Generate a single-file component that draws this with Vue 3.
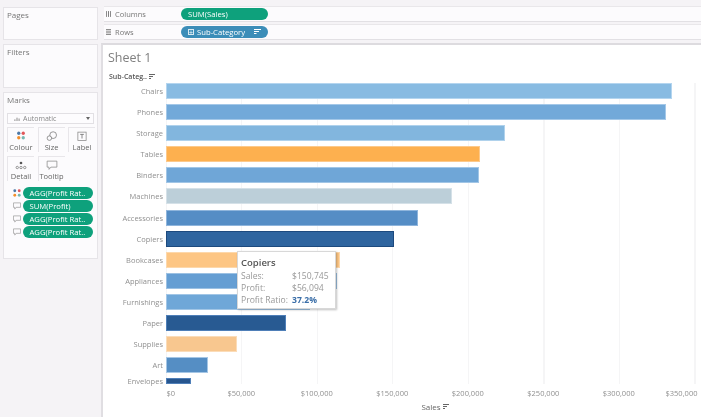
<script setup>
const bars = [
  { name: 'Chairs', w: 506, c: '#88bbe2', b: '#b4d5ef' },
  { name: 'Phones', w: 500, c: '#72a9d9', b: '#a4c8e8' },
  { name: 'Storage', w: 339, c: '#82b6de', b: '#b0d2ec' },
  { name: 'Tables', w: 314, c: '#fdb04f', b: '#fdc98a' },
  { name: 'Binders', w: 313, c: '#6fa6d7', b: '#a2c6e6' },
  { name: 'Machines', w: 286, c: '#bccfd9', b: '#d5e1e8' },
  { name: 'Accessories', w: 252, c: '#558dc5', b: '#8fb5dc' },
  { name: 'Copiers', w: 228, c: '#2f659f', b: '#1d4a7e' },
  { name: 'Bookcases', w: 174, c: '#fdc684', b: '#fdd8ab' },
  { name: 'Appliances', w: 171, c: '#659ed3', b: '#9cc1e3' },
  { name: 'Furnishings', w: 144, c: '#6fa7d8', b: '#a2c6e6' },
  { name: 'Paper', w: 120, c: '#285a92', b: '#4f7fb8' },
  { name: 'Supplies', w: 71, c: '#f8c78f', b: '#fbdcb8' },
  { name: 'Art', w: 42, c: '#558ec4', b: '#a5c6e5' },
  { name: 'Envelopes', w: 25, c: '#27568f', b: '#4f7fb8', small: true },
]
const ticks = ['$0', '$50,000', '$100,000', '$150,000', '$200,000', '$250,000', '$300,000', '$350,000']
const cards = [
  { label: 'Colour', icon: 'colour' },
  { label: 'Size', icon: 'size' },
  { label: 'Label', icon: 'label' },
  { label: 'Detail', icon: 'detail' },
  { label: 'Tooltip', icon: 'tooltip' },
]
const pills = [
  { text: 'AGG(Profit Rat..', icon: 'colour' },
  { text: 'SUM(Profit)', icon: 'tooltip' },
  { text: 'AGG(Profit Rat..', icon: 'tooltip' },
  { text: 'AGG(Profit Rat..', icon: 'tooltip' },
]
</script>

<template>
  <div class="page">
    <aside class="side">
      <section class="panel pages"><h3>Pages</h3></section>
      <section class="panel filters"><h3>Filters</h3></section>
      <section class="panel marks">
        <h3>Marks</h3>
        <div class="select">
          <svg width="6" height="5" viewBox="0 0 7 6"><path d="M1 6V4M3.500 6V2M6 6V3" stroke="#777" stroke-width="1" fill="none" /></svg>
          <span>Automatic</span>
          <i class="caret"></i>
        </div>
        <div class="cards">
          <div v-for="c in cards" :key="c.label" class="card">
            <svg width="12" height="10.500" viewBox="0 0 16 14">
              <template v-if="c.icon === 'colour'">
                <circle cx="5" cy="3" r="2.200" fill="#4e79a7" />
                <circle cx="11" cy="3" r="2.200" fill="#e15759" />
                <circle cx="5" cy="9" r="2.200" fill="#f28e2b" />
                <circle cx="11" cy="9" r="2.200" fill="#76b7b2" />
              </template>
              <template v-else-if="c.icon === 'size'">
                <circle cx="9.500" cy="5.500" r="4.500" fill="none" stroke="#777" />
                <circle cx="4.500" cy="9.500" r="3" fill="#fcfbfd" stroke="#777" />
              </template>
              <template v-else-if="c.icon === 'label'">
                <rect x="2.500" y="1.500" width="11" height="11" fill="none" stroke="#888" />
                <path d="M5.500 4.500h5M8 4.500v5.500" stroke="#666" fill="none" />
              </template>
              <template v-else-if="c.icon === 'detail'">
                <circle cx="8" cy="4" r="1.800" fill="#555" />
                <circle cx="3" cy="10" r="1.600" fill="none" stroke="#777" />
                <circle cx="8" cy="10" r="1.600" fill="none" stroke="#777" />
                <circle cx="13" cy="10" r="1.600" fill="none" stroke="#777" />
              </template>
              <path v-else d="M1.500 1.500h13v8h-8l-2.500 3v-3h-2.500z" fill="none" stroke="#888" />
            </svg>
            <span>{{ c.label }}</span>
          </div>
        </div>
        <div class="pills">
          <div v-for="(p, i) in pills" :key="i" class="pill-row">
            <svg width="8" height="8" viewBox="0 0 9 9">
              <template v-if="p.icon === 'colour'">
                <circle cx="2" cy="2" r="1.600" fill="#4e79a7" />
                <circle cx="7" cy="2" r="1.600" fill="#e15759" />
                <circle cx="2" cy="7" r="1.600" fill="#f28e2b" />
                <circle cx="7" cy="7" r="1.600" fill="#76b7b2" />
              </template>
              <path v-else d="M.500 1h8v5h-5l-1.500 2v-2h-1.500z" fill="none" stroke="#999" stroke-width=".8" />
            </svg>
            <span class="pill green small">{{ p.text }}</span>
          </div>
        </div>
      </section>
    </aside>

    <main class="main">
      <div class="shelf">
        <div class="shelf-label">
          <svg width="5" height="6" viewBox="0 0 6 7"><path d="M.500 0v7M3 0v7M5.500 0v7" stroke="#666" fill="none" /></svg>
          <span>Columns</span>
        </div>
        <span class="pill green wide">SUM(Sales)</span>
      </div>
      <div class="shelf">
        <div class="shelf-label">
          <svg width="5" height="6" viewBox="0 0 6 7"><path d="M0 .500h6M0 2.500h6M0 4.500h6M0 6.500h6" stroke="#777" fill="none" /></svg>
          <span>Rows</span>
        </div>
        <span class="pill blue wide">
          <i class="plus">+</i>
          <span class="grow">Sub-Category</span>
          <svg width="7" height="6" viewBox="0 0 7 6"><path d="M0 .500h7M0 2.500h5M0 4.500h2.500" stroke="#fff" fill="none" /></svg>
        </span>
      </div>

      <div class="sheet">
        <h1>Sheet 1</h1>
        <div class="head">
          <span>Sub-Categ..</span>
          <svg width="6" height="6" viewBox="0 0 6 6"><path d="M0 .500h6M0 2.500h4M0 4.500h2" stroke="#666" fill="none" /></svg>
        </div>
        <div class="chart">
          <div v-for="b in bars" :key="b.name" class="row" :class="{ short: b.small }">
            <span class="name">{{ b.name }}</span>
            <div class="track">
              <div class="bar" :style="{ width: b.w + 'px', background: b.c, borderColor: b.b }"></div>
            </div>
          </div>
          <div class="tip">
            <strong>Copiers</strong>
            <div class="tip-row"><span class="k">Sales:</span><span>$150,745</span></div>
            <div class="tip-row"><span class="k">Profit:</span><span>$56,094</span></div>
            <div class="tip-row"><span class="k">Profit Ratio:</span><b>37.2%</b></div>
          </div>
        </div>
        <div class="axis">
          <span v-for="t in ticks" :key="t">{{ t }}</span>
        </div>
        <div class="axis-title">
          <span>Sales</span>
          <svg width="6" height="6" viewBox="0 0 6 6"><path d="M0 .500h6M0 2.500h4M0 4.500h2" stroke="#666" fill="none" /></svg>
        </div>
      </div>
    </main>
  </div>
</template>

<style>
html, body { margin: 0; background: #f5f3f6; }
</style>

<style scoped>
.page {
  width: 701px;
  height: 417px;
  display: flex;
  overflow: hidden;
  background: #f5f3f6;
  font-family: "Open Sans", "Noto Sans", sans-serif;
  color: #666;
  filter: blur(0.35px);
}
.side {
  width: 95px;
  margin: 7px 3px 0 3px;
  display: flex;
  flex-direction: column;
  gap: 4px;
  flex: none;
}
.panel {
  background: #fcfbfd;
  border: 1px solid #e6e4e8;
  box-sizing: border-box;
  padding: 2px 3px;
}
.panel h3 { margin: 0; font-weight: 400; font-size: 8px; line-height: 10px; color: #777; }
.pages { height: 33px; }
.filters { height: 44px; }
.marks { height: 167px; }
.select {
  margin-top: 8px;
  height: 9px;
  border: 1px solid #e2e0e4;
  display: flex;
  align-items: center;
  gap: 3px;
  padding: 0 3px 0 6px;
  font-size: 7px;
  background: #fdfcfe;
  color: #888;
}
.select span { flex: 1; }
.caret { width: 0; height: 0; border: 2px solid transparent; border-top: 3px solid #666; border-bottom: 0; }
.cards { display: grid; grid-template-columns: repeat(3, 27px); gap: 4px 3.500px; margin-top: 3px; }
.card {
  height: 25px;
  box-sizing: border-box;
  border: 1px solid #e8e6ea;
  border-bottom-width: 0;
  border-right-width: 0;
  padding-top: 3px;
  display: flex;
  flex-direction: column;
  align-items: center;
  font-size: 7.500px;
  line-height: 10px;
  color: #666;
}
.pills { display: flex; flex-direction: column; gap: 1px; margin-top: 6px; }
.pill-row { display: flex; align-items: center; gap: 2px; margin-left: 6px; }
.pill {
  border-radius: 7px;
  color: #fff;
  display: flex;
  align-items: center;
  box-sizing: border-box;
  font-size: 7.700px;
  white-space: nowrap;
}
.green { background: #0ea17c; }
.blue { background: #3c8db8; }
.small { height: 12px; width: 70px; padding-left: 6.500px; flex: none; }
.wide { height: 12px; width: 87px; padding: 0 7px; gap: 3px; }
.plus { font-style: normal; font-size: 7px; line-height: 5px; width: 6px; height: 6px; border: 0.500px solid #d8e8f0; text-align: center; box-sizing: border-box; }
.grow { flex: 1; }
.main { flex: 1; min-width: 0; padding-top: 6px; display: flex; flex-direction: column; }
.shelf {
  height: 14px;
  margin-bottom: 2px;
  margin-left: 3px;
  background: #fcfbfd;
  border-top: 1px solid #e9e7ea;
  border-bottom: 1px solid #e2e0e4;
  display: flex;
  align-items: center;
}
.shelf-label { width: 77px; display: flex; align-items: center; gap: 4px; padding-left: 2px; box-sizing: border-box; font-size: 7.500px; color: #777; }
.sheet {
  flex: 1;
  margin-top: 1px;
  background: #fff;
  border-left: 2px solid #e0dee2;
  border-top: 2px solid #dddbdf;
  display: flex;
  flex-direction: column;
  position: relative;
  min-height: 0;
}
.sheet h1 { margin: 5px 0 0 5px; font-weight: 400; font-size: 12.500px; line-height: 16px; color: #808080; }
.head { margin: 5.500px 0 0 6px; display: flex; align-items: center; gap: 2px; font-size: 7px; line-height: 10px; font-weight: 600; color: #555; }
.chart {
  margin-top: 1.500px;
  position: relative;
  background-image: repeating-linear-gradient(to right, #f5f5f6 0, #f5f5f6 1px, transparent 1px, transparent 75.500px);
  background-position: 63px 0;
  background-repeat: no-repeat;
}
.row { display: flex; height: 21.100px; align-items: flex-start; }
.row.short { height: 6px; align-items: center; }
.name { width: 60px; margin-right: 3px; text-align: right; font-size: 7.500px; line-height: 16px; color: #909090; }
.track { flex: 1; display: flex; }
.bar { height: 16px; box-sizing: border-box; border: 1px solid; }
.short .bar { height: 6px; }
.tip {
  position: absolute;
  left: 134px;
  top: 168px;
  width: 99px;
  height: 58px;
  box-sizing: border-box;
  background: #fff;
  border: 1px solid #d8d8d8;
  box-shadow: 1px 1px 2px rgba(0,0,0,.25);
  padding: 4px 3px;
  font-size: 8.600px;
  line-height: 12px;
  color: #999;
}
.tip strong { display: block; font-size: 9.500px; font-weight: 600; color: #555; line-height: 14px; }
.tip-row { display: flex; }
.k { width: 51px; }
.tip b { color: #3a6ea8; font-weight: 700; }
.axis { position: relative; height: 15px; margin-left: 63px; display: grid; grid-template-columns: repeat(7, 75.500px) 1fr; margin-top: 3px; font-size: 7.500px; line-height: 12px; color: #909090; }
.axis span { transform: translateX(-38px); text-align: center; }
.axis span:first-child { transform: translateX(-33px); }
.axis span:last-child { transform: translateX(-29px); }
.axis-title { display: flex; align-items: center; justify-content: center; gap: 2px; font-size: 8px; line-height: 10px; color: #666; margin-left: 64px; margin-right: -2px; }
</style>
